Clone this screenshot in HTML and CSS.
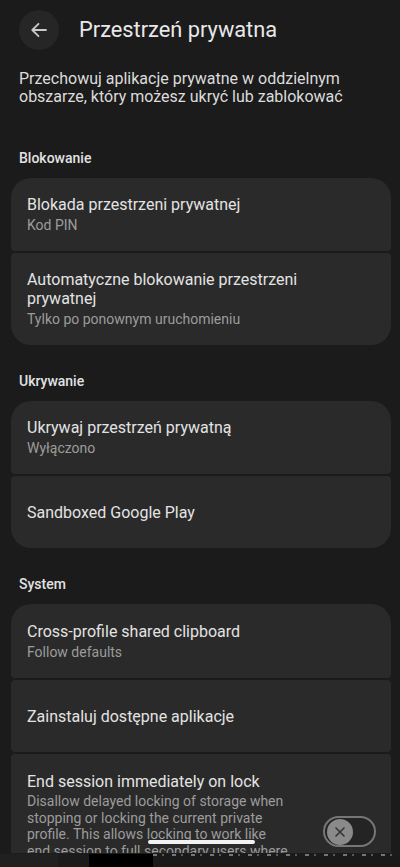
FILE: index.html
```html
<!DOCTYPE html>
<html lang="pl">
<head>
<meta charset="utf-8">
<title>Przestrzeń prywatna</title>
<link rel="stylesheet" href="styles.css">
</head>
<body>
<div class="screen">
  <header class="appbar">
    <button class="back" aria-label="Wstecz">
      <svg width="18" height="18" viewBox="0 0 18 18" fill="none" stroke="#c9c9c9" stroke-width="1.8" stroke-linecap="round" stroke-linejoin="round">
        <path d="M16 9H2.5M8.5 2.8L2.3 9l6.2 6.2"/>
      </svg>
    </button>
    <h1 class="title">Przestrzeń prywatna</h1>
  </header>

  <p class="intro">Przechowuj aplikacje prywatne w oddzielnym obszarze, który możesz ukryć lub zablokować</p>

  <h2 class="section">Blokowanie</h2>
  <div class="group">
    <div class="item">
      <div class="item-title">Blokada przestrzeni prywatnej</div>
      <div class="item-sub">Kod PIN</div>
    </div>
    <div class="item">
      <div class="item-title">Automatyczne blokowanie przestrzeni prywatnej</div>
      <div class="item-sub">Tylko po ponownym uruchomieniu</div>
    </div>
  </div>

  <h2 class="section">Ukrywanie</h2>
  <div class="group">
    <div class="item">
      <div class="item-title">Ukrywaj przestrzeń prywatną</div>
      <div class="item-sub">Wyłączono</div>
    </div>
    <div class="item">
      <div class="item-title">Sandboxed Google Play</div>
    </div>
  </div>

  <h2 class="section">System</h2>
  <div class="group">
    <div class="item item-tall">
      <div class="item-title">Cross-profile shared clipboard</div>
      <div class="item-sub">Follow defaults</div>
    </div>
    <div class="item">
      <div class="item-title">Zainstaluj dostępne aplikacje</div>
    </div>
    <div class="item item-switch">
      <div class="switch-text">
        <div class="item-title">End session immediately on lock</div>
        <div class="item-sub long">Disallow delayed locking of storage when stopping or locking the current private profile. This allows locking to work like end session to full secondary users where the data is locked at rest.</div>
      </div>
      <div class="toggle">
        <div class="thumb">
          <svg width="12" height="12" viewBox="0 0 12 12" stroke="#333" stroke-width="1.6" stroke-linecap="round">
            <path d="M2 2l8 8M10 2l-8 8"/>
          </svg>
        </div>
      </div>
    </div>
  </div>
</div>
<div class="navbar">
  <div class="nav-a"></div>
  <div class="nav-b"></div>
  <div class="nav-c"></div>
  <div class="nav-d"></div>
</div>
<div class="pill"></div>
</body>
</html>
```

FILE: styles.css
```css
* { box-sizing: border-box; }
html, body {
  margin: 0;
  padding: 0;
  background: #1b1b1b;
  width: 400px;
  height: 867px;
  overflow: hidden;
  font-family: Roboto, "Noto Sans", sans-serif;
  color: #e3e3e3;
}
.screen {
  height: 853px;
  overflow: hidden;
}
.appbar {
  display: flex;
  align-items: center;
  height: 59px;
  padding-left: 19px;
  gap: 20px;
}
.back {
  width: 40px;
  height: 40px;
  border-radius: 50%;
  border: 0;
  padding: 0;
  background: #262626;
  display: flex;
  align-items: center;
  justify-content: center;
}
.title {
  margin: 0;
  font-size: 21.8px;
  font-weight: 400;
  color: #e8e8e8;
  line-height: 26px;
}
.intro {
  margin: 11px 0 0;
  padding: 0 19px;
  font-size: 16px;
  line-height: 17.5px;
  color: #dcdcdc;
}
.section {
  margin: 45px 0 0;
  padding: 0 19px;
  font-size: 14px;
  line-height: 17px;
  font-weight: 500;
  color: #e2e2e2;
}
.group + .section { margin-top: 28px; }
.group {
  margin: 11px 9px 0 11px;
  display: flex;
  flex-direction: column;
  gap: 2px;
}
.group-system { margin-top: 10px; }
.item {
  background: #2a2a2a;
  border-radius: 4px;
  min-height: 72px;
  padding: 17px 60px 17px 16px;
  display: flex;
  flex-direction: column;
  justify-content: center;
}
.group .item:first-child { border-radius: 20px 20px 4px 4px; }
.group .item:last-child { border-radius: 4px 4px 20px 20px; }
.item-tall { min-height: 74px; }
.item-title {
  font-size: 16px;
  line-height: 19px;
  color: #e3e3e3;
}
.item-sub {
  margin-top: 3px;
  font-size: 14px;
  line-height: 17px;
  color: #9c9c9c;
}
.item-switch {
  flex-direction: row;
  justify-content: flex-start;
  align-items: flex-start;
  padding: 18px 15px 16px 16px;
  gap: 32px;
}
.switch-text { width: 264px; }
.long { line-height: 16.7px; margin-top: 2px; }
.toggle {
  margin-top: 44px;
  width: 53px;
  height: 31px;
  border-radius: 16px;
  border: 2px solid #767676;
  background: #242424;
  display: flex;
  align-items: center;
  padding-left: 2px;
  flex-shrink: 0;
}
.thumb {
  width: 26px;
  height: 26px;
  border-radius: 50%;
  background: #8a8a8a;
  display: flex;
  align-items: center;
  justify-content: center;
}
.navbar {
  height: 14px;
  display: flex;
  background: #1c1c1c;
  border-top: 1px solid transparent;
}
.nav-a { width: 58px; background: #202020; }
.nav-b { width: 31px; background: #1b1b1b; }
.nav-c { width: 64px; background: #000; }
.nav-d {
  flex: 1;
  background:
    repeating-linear-gradient(90deg, rgba(230,230,230,0.45) 0 4px, transparent 4px 9px, rgba(230,230,230,0.3) 9px 11px, transparent 11px 19px) top left / 100% 2px no-repeat,
    #1a1a1a;
}
.pill {
  position: fixed;
  left: 148px;
  top: 840px;
  width: 107px;
  height: 4px;
  border-radius: 2px;
  background: #f2f2f2;
}
```
